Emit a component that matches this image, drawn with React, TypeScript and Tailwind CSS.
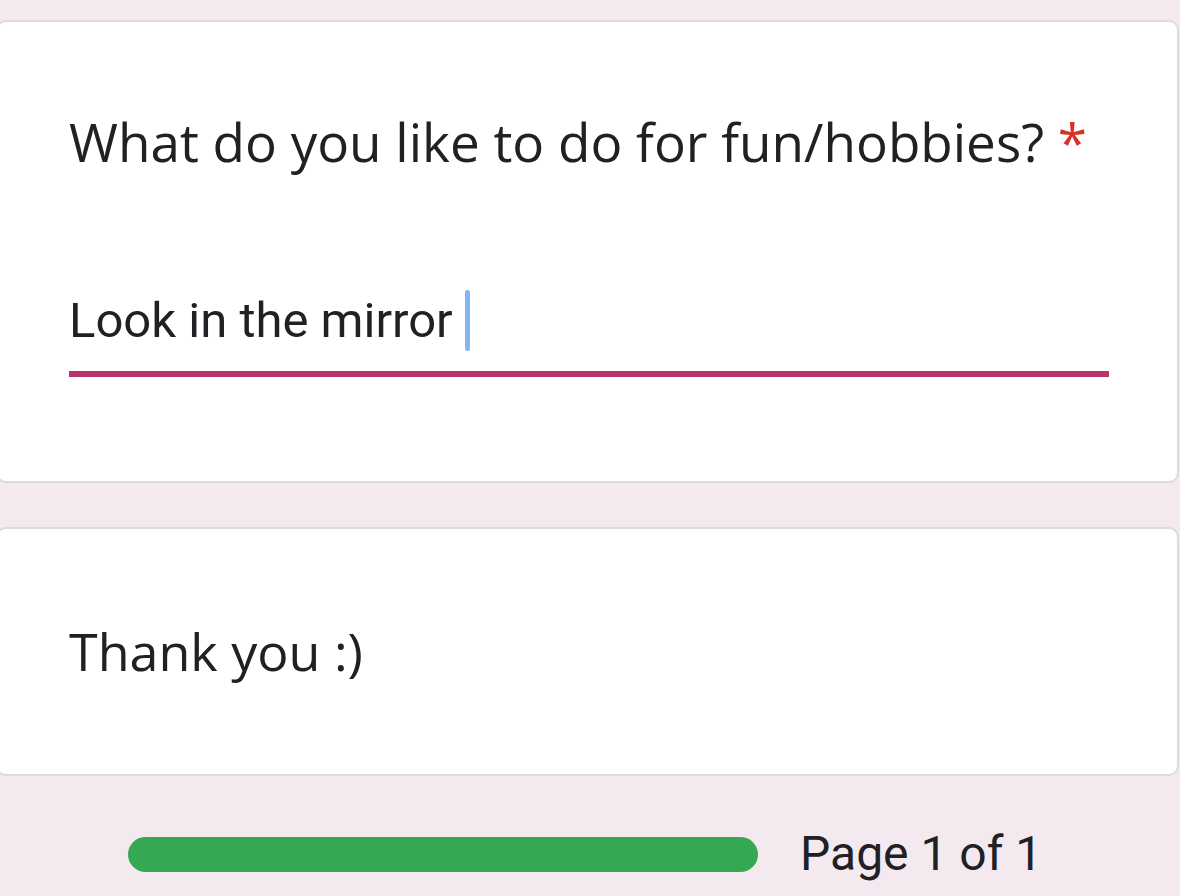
export default function App() {
  const exo = { fontFamily: '"Open Sans", "Noto Sans", sans-serif' };
  const roboto = { fontFamily: 'Roboto, "Noto Sans", sans-serif' };
  return (
    <div className="h-[896px] w-[1180px] overflow-hidden bg-[#f5e9f0] pt-[20px]">
      <div className="-ml-[4px] h-[463px] w-[1183px] rounded-[10px] border-2 border-[#dadce0] bg-white pl-[71px] pt-[90px]">
        <div className="text-[53px] leading-[60px] text-[#202124] whitespace-nowrap" style={exo}>
          What do you like to do for fun/hobbies? <span className="text-[#d93025]">*</span>
        </div>
        <div className="mt-[118px] flex h-[61px] items-center">
          <span className="text-[49px] leading-[56px] text-[#202124] whitespace-nowrap" style={roboto}>
            Look in the mirror
          </span>
          <span className="ml-[12px] h-[61px] w-[5px] rounded-full bg-[#84b6f4]" />
        </div>
        <div className="mt-[20px] h-[6px] w-[1040px] bg-[#b7346f]" />
      </div>
      <div className="-ml-[4px] mt-[44px] h-[249px] w-[1183px] rounded-[10px] border-2 border-[#dadce0] bg-white pl-[71px] pt-[92px]">
        <div className="text-[52px] leading-[60px] text-[#202124] whitespace-nowrap" style={exo}>
          Thank you :)
        </div>
      </div>
      <div className="mt-[50px] flex h-[56px] items-center">
        <div className="ml-[128px] h-[35px] w-[630px] rounded-full bg-[#34a853]" />
        <span className="ml-[42px] text-[48px] leading-[56px] text-[#202124] whitespace-nowrap" style={roboto}>
          Page 1 of 1
        </span>
      </div>
    </div>
  );
}
